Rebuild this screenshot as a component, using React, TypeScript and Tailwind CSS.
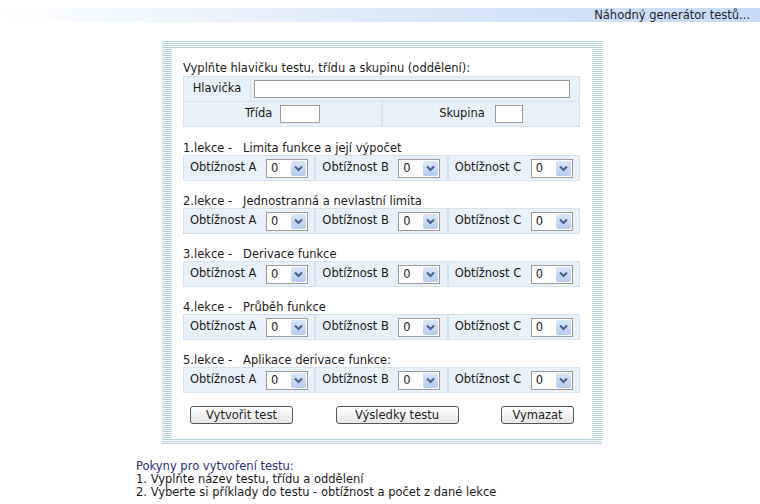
import { ReactNode } from 'react';

const lessons = [
  'Limita funkce a její výpočet',
  'Jednostranná a nevlastní limita',
  'Derivace funkce',
  'Průběh funkce',
  'Aplikace derivace funkce:',
];

const font = "font-['DejaVu_Sans',Verdana,sans-serif]";

const Select = () => (
  <div className="flex h-[19px] w-[42px] items-stretch border border-[#9a9a9a] bg-white">
    <span className="flex-1 pl-[4px] text-[11.5px] leading-[17px] text-[#222]">0</span>
    <div className="m-[1px] flex w-[15px] items-center justify-center rounded-[2px] bg-gradient-to-b from-[#dbe6f7] to-[#b7cbee]">
      <svg width="9" height="7" viewBox="0 0 9 7">
        <path d="M1 1.5 L4.5 5 L8 1.5" fill="none" stroke="#4a5f8c" strokeWidth="2" />
      </svg>
    </div>
  </div>
);

const Cell = ({ children, className = '' }: { children: ReactNode; className?: string }) => (
  <div className={`flex items-center bg-[#e8f1f9] ${className}`}>{children}</div>
);

const Button = ({ label, width }: { label: string; width: string }) => (
  <button
    className={`h-[18px] ${width} rounded-[3px] border border-[#555] bg-gradient-to-b from-white to-[#e6e6e6] text-[11.5px] font-normal leading-[16px] text-[#222]`}
  >
    {label}
  </button>
);

export default function App() {
  return (
    <div className={`min-h-[504px] w-[760px] bg-white text-[11.5px] text-[#1a1a1a] ${font}`}>
      <div className="pt-[8px]">
        <div className="h-[14px] bg-gradient-to-r from-white via-[#dce9f9] to-[#c6daf4] pr-[10px] text-right leading-[14px] text-[#1e1e2e]">
          Náhodný generátor testů...
        </div>
      </div>

      <div className="ml-[162px] mt-[19px] w-[440px] bg-[repeating-linear-gradient(to_bottom,#b4d0da_0px,#b4d0da_1px,#ffffff_1px,#ffffff_2px)] px-[10px] pb-[5px] pt-[8px]">
        <div className="bg-white pb-[15px] pl-[11px] pr-[12px] pt-[12px]">
          <div className="h-[15px] leading-[15px]">Vyplňte hlavičku testu, třídu a skupinu (oddělení):</div>

          <div className="flex flex-col gap-[1px] bg-[#d3e2ec] p-[1px]">
            <div className="flex h-[24px] gap-[1px]">
              <Cell className="w-[66px] justify-center">Hlavička</Cell>
              <Cell className="flex-1 pl-[3px]">
                <div className="h-[18px] w-[316px] border border-[#9a9a9a] bg-white" />
              </Cell>
            </div>
            <div className="flex h-[24px] gap-[2px]">
              <Cell className="w-[197px] justify-center gap-[8px]">
                <span>Třída</span>
                <div className="h-[18px] w-[40px] border border-[#9a9a9a] bg-white" />
              </Cell>
              <Cell className="flex-1 justify-center gap-[10px]">
                <span>Skupina</span>
                <div className="h-[18px] w-[28px] border border-[#9a9a9a] bg-white" />
              </Cell>
            </div>
          </div>

          <div className="mt-[15px] flex flex-col gap-[14px]">
            {lessons.map((title, i) => (
              <div key={title}>
                <div className="h-[13px] leading-[13px] whitespace-pre">
                  {`${i + 1}.lekce -   ${title}`}
                </div>
                <div className="grid h-[26px] grid-cols-3 gap-[2px] bg-[#d3e2ec] p-[1px]">
                  {['A', 'B', 'C'].map((level) => (
                    <Cell key={level} className="pl-[6px]">
                      <span className="w-[76px] whitespace-nowrap">Obtížnost {level}</span>
                      <Select />
                    </Cell>
                  ))}
                </div>
              </div>
            ))}
          </div>

          <div className="mt-[13px] flex items-center justify-between pl-[7px] pr-[6px]">
            <Button label="Vytvořit test" width="w-[103px]" />
            <Button label="Výsledky testu" width="w-[123px]" />
            <Button label="Vymazat" width="w-[73px]" />
          </div>
        </div>
      </div>

      <div className="ml-[136px] mt-[16px] leading-[13px]">
        <div className="text-[#2a2a80]">Pokyny pro vytvoření testu:</div>
        <div>1. Vyplňte název testu, třídu a oddělení</div>
        <div>2. Vyberte si příklady do testu - obtížnost a počet z dané lekce</div>
      </div>
    </div>
  );
}
